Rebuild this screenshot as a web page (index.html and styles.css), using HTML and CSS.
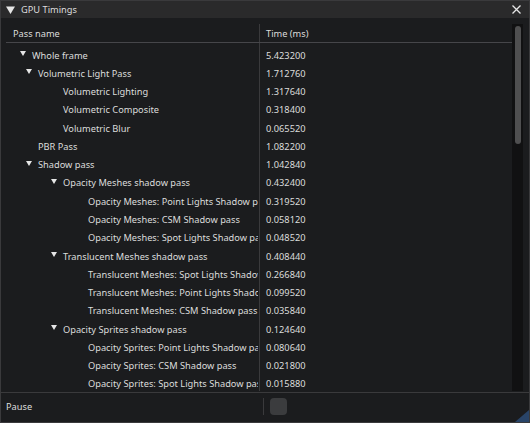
FILE: index.html
```html
<!DOCTYPE html>
<html>
<head>
<meta charset="utf-8">
<link rel="stylesheet" href="styles.css">
</head>
<body>
<div class="window">
  <div class="titlebar">
    <svg class="title-arrow" width="9" height="8" viewBox="0 0 9 8"><polygon points="0,0.5 9,0.5 4.5,8" fill="#e6e6e6"/></svg>
    <span class="title">GPU Timings</span>
    <svg class="close" width="9" height="9" viewBox="0 0 9 9"><path d="M0.5 0.5 L8.5 8.5 M8.5 0.5 L0.5 8.5" stroke="#e6e6e6" stroke-width="1.3"/></svg>
  </div>
  <div class="region">
    <div class="table">
      <div class="row head">
        <div class="name">Pass name</div>
        <div class="time">Time (ms)</div>
      </div>
      <div class="body">
        <div class="row"><div class="name a1"><i class="tri"></i>Whole frame</div><div class="time">5.423200</div></div>
        <div class="row"><div class="name a2"><i class="tri"></i>Volumetric Light Pass</div><div class="time">1.712760</div></div>
        <div class="row"><div class="name l3">Volumetric Lighting</div><div class="time">1.317640</div></div>
        <div class="row"><div class="name l3">Volumetric Composite</div><div class="time">0.318400</div></div>
        <div class="row"><div class="name l3">Volumetric Blur</div><div class="time">0.065520</div></div>
        <div class="row"><div class="name l2">PBR Pass</div><div class="time">1.082200</div></div>
        <div class="row"><div class="name a2"><i class="tri"></i>Shadow pass</div><div class="time">1.042840</div></div>
        <div class="row"><div class="name a3"><i class="tri"></i>Opacity Meshes shadow pass</div><div class="time">0.432400</div></div>
        <div class="row"><div class="name l4">Opacity Meshes: Point Lights Shadow pass</div><div class="time">0.319520</div></div>
        <div class="row"><div class="name l4">Opacity Meshes: CSM Shadow pass</div><div class="time">0.058120</div></div>
        <div class="row"><div class="name l4">Opacity Meshes: Spot Lights Shadow pass</div><div class="time">0.048520</div></div>
        <div class="row"><div class="name a3"><i class="tri"></i>Translucent Meshes shadow pass</div><div class="time">0.408440</div></div>
        <div class="row"><div class="name l4">Translucent Meshes: Spot Lights Shadow pass</div><div class="time">0.266840</div></div>
        <div class="row"><div class="name l4">Translucent Meshes: Point Lights Shadow pass</div><div class="time">0.099520</div></div>
        <div class="row"><div class="name l4">Translucent Meshes: CSM Shadow pass</div><div class="time">0.035840</div></div>
        <div class="row"><div class="name a3"><i class="tri"></i>Opacity Sprites shadow pass</div><div class="time">0.124640</div></div>
        <div class="row"><div class="name l4">Opacity Sprites: Point Lights Shadow pass</div><div class="time">0.080640</div></div>
        <div class="row"><div class="name l4">Opacity Sprites: CSM Shadow pass</div><div class="time">0.021800</div></div>
        <div class="row"><div class="name l4">Opacity Sprites: Spot Lights Shadow pass</div><div class="time">0.015880</div></div>
      </div>
    </div>
    <div class="scrollbar"><div class="grab"></div></div>
  </div>
  <div class="footer">
    <div class="pause">Pause</div>
    <div class="vsep"></div>
    <div class="checkbox"></div>
  </div>
  <div class="grip"></div>
</div>
</body>
</html>
```

FILE: styles.css
```css
html, body {
  margin: 0;
  padding: 0;
  background: #1b1c1e;
}
body {
  font-family: "Noto Sans", "Open Sans", sans-serif;
  font-size: 9.25px;
  color: #dcdcdc;
}
.window {
  width: 530px;
  height: 423px;
  box-sizing: border-box;
  border: 1px solid #3a3a3c;
  background: #1b1c1e;
  display: flex;
  flex-direction: column;
  position: relative;
  overflow: hidden;
}
.titlebar {
  height: 17px;
  flex: none;
  background: #2a2a2b;
  display: flex;
  align-items: center;
  padding: 0 0 0 5px;
}
.title-arrow {
  margin-top: 1px;
}
.title {
  margin-left: 6px;
}
.close {
  margin-left: auto;
  margin-right: 8px;
}
.region {
  margin: 6px 6px 0 5px;
  height: 367px;
  flex: none;
  display: flex;
}
.table {
  width: 506px;
  height: 100%;
  background: linear-gradient(to right, transparent 253px, #3a3a3c 253px, #3a3a3c 254px, transparent 254px);
  overflow: hidden;
}
.row {
  display: flex;
  height: 18.28px;
  align-items: center;
  white-space: nowrap;
}
.row.head {
  height: 18px;
  border-bottom: 1px solid #46464a;
}
.body {
  padding-top: 3px;
}
.name {
  width: 252px;
  flex: none;
  overflow: hidden;
  display: flex;
  align-items: center;
  box-sizing: border-box;
}
.head .name {
  padding-left: 7px;
}
.time {
  padding-left: 8px;
}
.tri {
  width: 12px;
  flex: none;
  height: 6px;
  position: relative;
  margin-top: -2px;
}
.tri::before {
  content: "";
  position: absolute;
  left: 0;
  top: 0;
  border-left: 3px solid transparent;
  border-right: 3px solid transparent;
  border-top: 5px solid #e6e6e6;
}
.a1 { padding-left: 14px; }
.a2 { padding-left: 20px; }
.a3 { padding-left: 45px; }
.l2 { padding-left: 32px; }
.l3 { padding-left: 57px; }
.l4 { padding-left: 82px; }
.scrollbar {
  width: 11px;
  flex: none;
  background: #111112;
  height: 100%;
  padding: 2px 2px 0 3px;
  box-sizing: border-box;
}
.grab {
  height: 118px;
  background: #4f4f50;
  border-radius: 3px;
}
.footer {
  margin-top: 1px;
  border-top: 1px solid #3a3a3c;
  display: flex;
  align-items: center;
  height: 26px;
  padding-left: 5px;
}
.pause {
  width: 257px;
}
.vsep {
  width: 1px;
  height: 17px;
  background: #3a3a3c;
}
.checkbox {
  width: 17px;
  height: 17px;
  margin-left: 6px;
  border-radius: 4px;
  background: #3b3c3e;
}
.grip {
  position: absolute;
  right: 0;
  bottom: 0;
  width: 0;
  height: 0;
  border-left: 14px solid transparent;
  border-bottom: 12px solid #294468;
}
```
